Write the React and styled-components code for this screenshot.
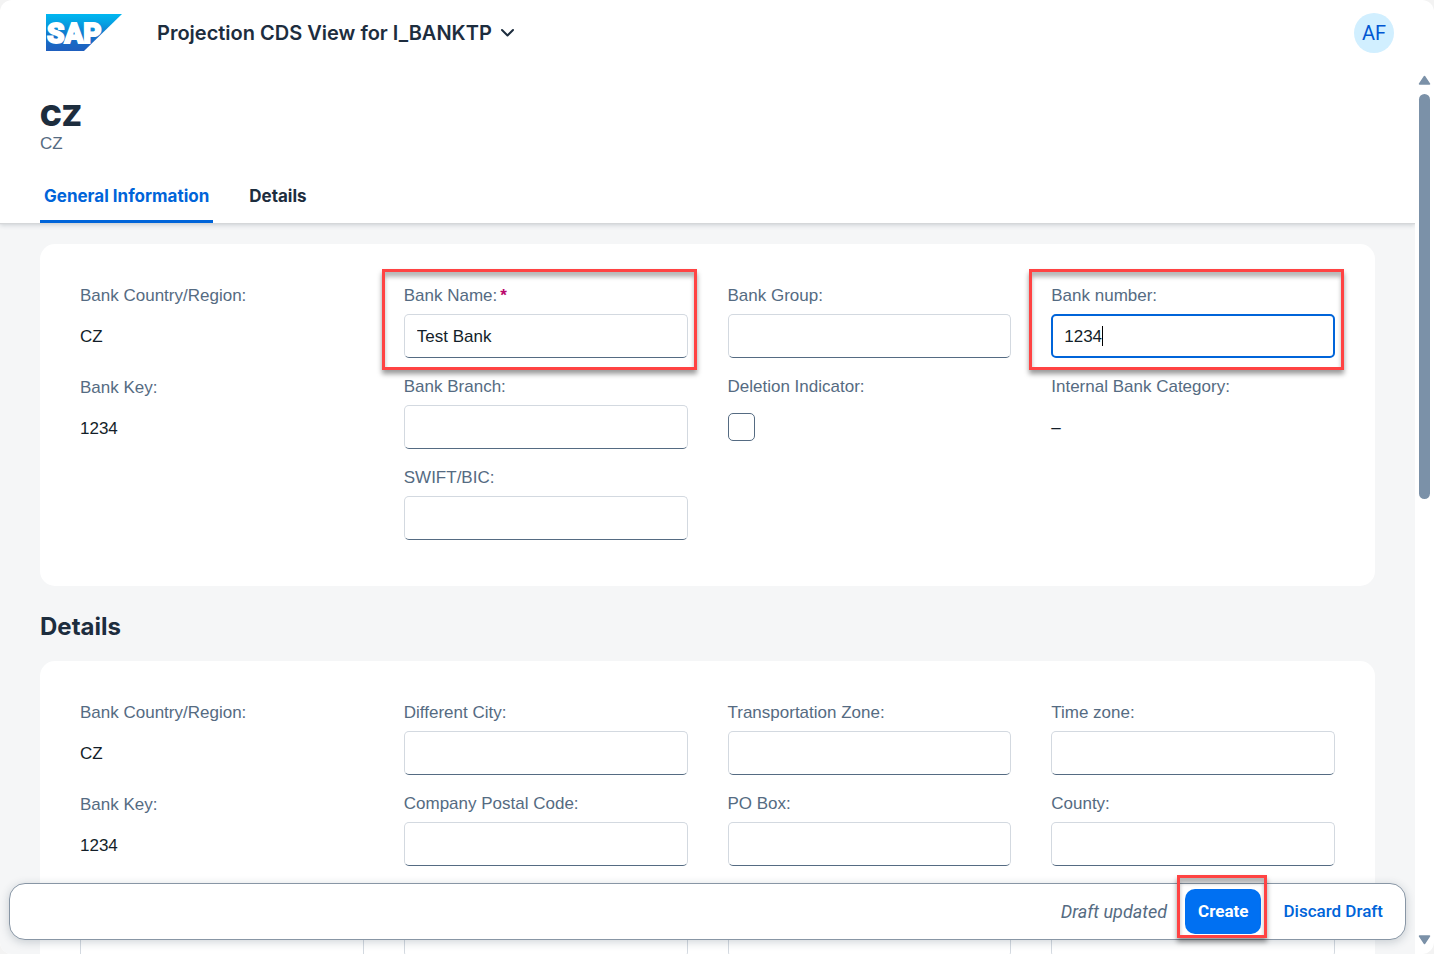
import React from "react";
import styled, { createGlobalStyle, css } from "styled-components";

const GlobalStyle = createGlobalStyle`
  *, *::before, *::after { box-sizing: border-box; }
  body {
    margin: 0;
    background: #f3f3f3;
    color: #1d2d3e;
    font-family: "Liberation Sans", Arial, sans-serif;
    font-size: 17px;
    line-height: 24px;
  }
`;

const Shell = styled.div`
  position: relative;
  display: flex;
  flex-direction: column;
  height: 100vh;
  overflow: hidden;
  border-radius: 12px;
  background: #fff;
`;

const ShellBar = styled.header`
  display: flex;
  align-items: center;
  flex: none;
  height: 66px;
  padding: 0 40px 0 46px;
`;

const Logo = styled.svg`
  display: block;
  margin-right: 35px;
`;

const AppTitle = styled.button`
  display: flex;
  align-items: center;
  gap: 8px;
  padding: 0;
  border: 0;
  background: none;
  color: #1d2d3e;
  font: 600 20px/28px Inter, "Liberation Sans", sans-serif;
`;

const Avatar = styled.button`
  width: 40px;
  height: 40px;
  margin-left: auto;
  padding: 0;
  border: 0;
  border-radius: 50%;
  background: #d1efff;
  color: #0057d2;
  font: 400 20px/40px Roboto, "Liberation Sans", sans-serif;
`;

const Viewport = styled.div`
  display: flex;
  flex: 1;
  min-height: 0;
`;

const Page = styled.main`
  flex: 1;
  min-width: 0;
  overflow: hidden;
  background: #f5f6f7;
`;

const ScrollTrack = styled.div`
  display: flex;
  flex-direction: column;
  align-items: center;
  flex: none;
  gap: 9px;
  width: 19px;
  padding: 9px 0;
`;

const ScrollThumb = styled.div`
  width: 11px;
  height: 46.5%;
  margin-bottom: auto;
  border-radius: 6px;
  background: #7b91a8;
`;

const ObjectHeader = styled.div`
  position: relative;
  height: 157px;
  padding: 34px 40px 0;
  background: #fff;
  box-shadow: 0 1px 1px #d5d7d9, 0 2px 5px rgba(34, 53, 72, 0.2);
`;

const ObjectTitle = styled.h1`
  margin: 0;
  font: 900 29px/32px Inter, Roboto, sans-serif;
`;

const ObjectSubtitle = styled.p`
  margin: 0;
  color: #556b82;
`;

const Tabs = styled.nav`
  display: flex;
  gap: 32px;
  margin-top: 13px;
`;

const Tab = styled.a`
  height: 54px;
  padding: 15px 4px 0;
  border-bottom: 3px solid ${(p) => (p.$active ? "#0064d9" : "transparent")};
  border-radius: 2px 2px 0 0;
  color: ${(p) => (p.$active ? "#0064d9" : "#1d2d3e")};
  font: 700 17px/24px Inter, "Liberation Sans", sans-serif;
  text-decoration: none;
`;

const Sections = styled.div`
  padding: 21px 40px 0;
`;

const Card = styled.section`
  display: grid;
  grid-template-columns: repeat(4, minmax(0, 1fr));
  gap: 40px;
  padding: 39px 40px 46px;
  border-radius: 15px;
  background: #fff;
`;

const SectionTitle = styled.h2`
  margin: 0;
  padding: 25px 0 18px;
  font: 700 24px/32px Inter, "Liberation Sans", sans-serif;
`;

const Column = styled.div`
  display: flex;
  flex-direction: column;
  gap: 16px;
`;

const FieldBox = styled.div`
  position: relative;
  display: flex;
  flex-direction: column;
  align-items: stretch;
  gap: 5px;
`;

const Label = styled.label`
  min-height: 26px;
  color: #556b82;
  line-height: 26px;
  white-space: nowrap;
`;

const Required = styled.span`
  margin-left: 3px;
  color: #ba066c;
  font-weight: 700;
`;

const TextInput = styled.input`
  width: 100%;
  height: 44px;
  padding: 1px 12px 0;
  border: 1px solid #d3d9e0;
  border-bottom-color: #556b82;
  border-radius: 5px;
  outline: 0;
  background: #fff;
  color: #131e29;
  font: inherit;
  ${(p) =>
    p.$focused &&
    css`
      padding: 1px 11px 0;
      border: 2px solid #0064d9;
    `}
`;

const Caret = styled.span`
  position: absolute;
  left: 51px;
  bottom: 12px;
  width: 1px;
  height: 20px;
  background: #000;
`;

const Output = styled.output`
  height: 45px;
  color: #131e29;
  line-height: 46px;
`;

const Checkbox = styled.input`
  appearance: none;
  width: 27px;
  height: 28px;
  margin: 8px 0;
  border: 1px solid #556b82;
  border-radius: 5px;
  background: #fff;
`;

const marker = css`
  position: absolute;
  border: 3px solid #ff4343;
  box-shadow: 0 4px 5px rgba(0, 0, 0, 0.4), inset 0 5px 4px rgba(0, 0, 0, 0.28);
  pointer-events: none;
`;

const FieldMarker = styled.span`
  ${marker}
  inset: -14px -9px -12px -22px;
`;

const ButtonMarker = styled.span`
  ${marker}
  inset: -14px -6px -4px -8px;
`;

const FooterBar = styled.footer`
  position: absolute;
  right: 28px;
  bottom: 14px;
  left: 9px;
  display: flex;
  align-items: center;
  justify-content: flex-end;
  height: 57px;
  padding-right: 22px;
  border: 1px solid #8896a5;
  border-radius: 16px;
  background: #fff;
  box-shadow: 0 2px 10px rgba(34, 53, 72, 0.22);
`;

const DraftStatus = styled.span`
  margin-right: 18px;
  color: #556b82;
  font: italic 400 18px/24px Roboto, "Liberation Sans", sans-serif;
`;

const ButtonHolder = styled.span`
  position: relative;
  margin-right: 22px;
`;

const FooterButton = styled.button`
  display: block;
  height: 45px;
  padding: ${(p) => (p.$primary ? "0 13px 2px" : "0 0 2px")};
  border: 0;
  border-radius: 10px;
  background: ${(p) => (p.$primary ? "#0070f2" : "none")};
  color: ${(p) => (p.$primary ? "#fff" : "#0064d9")};
  font: ${(p) => (p.$primary ? 700 : 500)} 17px/24px Roboto, "Liberation Sans", sans-serif;
`;

const general = [
  [
    { label: "Bank Country/Region:", type: "output", value: "CZ" },
    { label: "Bank Key:", type: "output", value: "1234" },
  ],
  [
    { label: "Bank Name:", required: true, value: "Test Bank", marked: true },
    { label: "Bank Branch:" },
    { label: "SWIFT/BIC:" },
  ],
  [{ label: "Bank Group:" }, { label: "Deletion Indicator:", type: "checkbox" }],
  [
    { label: "Bank number:", value: "1234", focused: true, marked: true },
    { label: "Internal Bank Category:", type: "output", value: "–" },
  ],
];

const details = [
  [
    { label: "Bank Country/Region:", type: "output", value: "CZ" },
    { label: "Bank Key:", type: "output", value: "1234" },
    {},
  ],
  [{ label: "Different City:" }, { label: "Company Postal Code:" }, {}],
  [{ label: "Transportation Zone:" }, { label: "PO Box:" }, {}],
  [{ label: "Time zone:" }, { label: "County:" }, {}],
];

function Field({ id, label, type, value, required, focused, marked }) {
  return (
    <FieldBox>
      <Label htmlFor={id}>
        {label}
        {required && <Required>*</Required>}
      </Label>
      {type === "output" && <Output id={id}>{value}</Output>}
      {type === "checkbox" && <Checkbox id={id} type="checkbox" />}
      {!type && <TextInput id={id} type="text" defaultValue={value} required={required} $focused={focused} />}
      {focused && <Caret />}
      {marked && <FieldMarker />}
    </FieldBox>
  );
}

function FormCard({ name, columns }) {
  return (
    <Card id={name}>
      {columns.map((fields, c) => (
        <Column key={c}>
          {fields.map((field, r) => (
            <Field key={r} id={`${name}-${c}-${r}`} {...field} />
          ))}
        </Column>
      ))}
    </Card>
  );
}

function SapLogo() {
  return (
    <Logo width="76" height="38" viewBox="0 0 76 38" role="img" aria-label="SAP">
      <defs>
        <linearGradient id="sap" x1="0" y1="0" x2="0" y2="1">
          <stop offset="0" stopColor="#00b8f1" />
          <stop offset="0.25" stopColor="#06a0e2" />
          <stop offset="0.6" stopColor="#1471c9" />
          <stop offset="1" stopColor="#1f5fbe" />
        </linearGradient>
      </defs>
      <path d="M0 0H76L38 37H0Z" fill="url(#sap)" />
      <text
        x="1"
        y="29"
        fill="#fff"
        stroke="#fff"
        strokeWidth="2"
        fontFamily="Roboto, Liberation Sans, sans-serif"
        fontSize="28"
        fontWeight="800"
      >
        SAP
      </text>
    </Logo>
  );
}

function ScrollArrow({ down }) {
  return (
    <svg width="13" height="10" viewBox="0 0 13 10" aria-hidden="true">
      <path
        d={down ? "M1.5 1H11.5L6.5 8.5Z" : "M1.5 9H11.5L6.5 1.5Z"}
        fill="#7b91a8"
        stroke="#7b91a8"
        strokeWidth="1.5"
        strokeLinejoin="round"
      />
    </svg>
  );
}

export default function App() {
  return (
    <>
      <GlobalStyle />
      <Shell>
        <ShellBar>
          <SapLogo />
          <AppTitle type="button">
            Projection CDS View for I_BANKTP
            <svg width="15" height="10" viewBox="0 0 15 10" aria-hidden="true">
              <path d="M2 2L7.5 7.5L13 2" fill="none" stroke="#1d2d3e" strokeWidth="2" strokeLinecap="round" strokeLinejoin="round" />
            </svg>
          </AppTitle>
          <Avatar type="button">AF</Avatar>
        </ShellBar>
        <Viewport>
          <Page>
            <ObjectHeader>
              <ObjectTitle>CZ</ObjectTitle>
              <ObjectSubtitle>CZ</ObjectSubtitle>
              <Tabs>
                <Tab href="#general" $active>General Information</Tab>
                <Tab href="#details">Details</Tab>
              </Tabs>
            </ObjectHeader>
            <Sections>
              <FormCard name="general" columns={general} />
              <SectionTitle>Details</SectionTitle>
              <FormCard name="details" columns={details} />
            </Sections>
          </Page>
          <ScrollTrack>
            <ScrollArrow />
            <ScrollThumb />
            <ScrollArrow down />
          </ScrollTrack>
        </Viewport>
        <FooterBar>
          <DraftStatus>Draft updated</DraftStatus>
          <ButtonHolder>
            <FooterButton type="button" $primary>Create</FooterButton>
            <ButtonMarker />
          </ButtonHolder>
          <FooterButton type="button">Discard Draft</FooterButton>
        </FooterBar>
      </Shell>
    </>
  );
}
